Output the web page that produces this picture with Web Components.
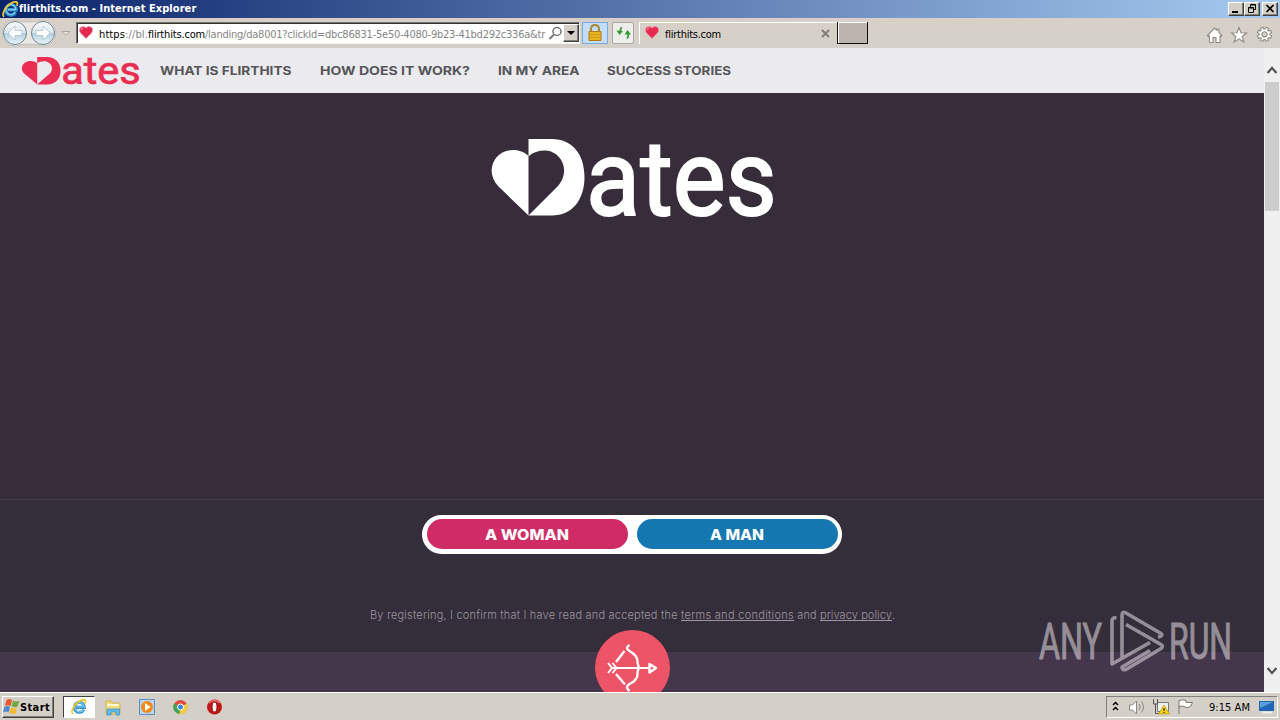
<!DOCTYPE html>
<html lang="en">
<head>
<meta charset="utf-8">
<title>flirthits.com - Internet Explorer</title>
<style>
  body {
    margin: 0;
    width: 1280px;
    height: 720px;
    overflow: hidden;
  }
</style>
</head>
<body>
<desktop-screen></desktop-screen>

<script>
// Fits its text to a fixed width: with letter-spacing, or by widening
// the glyphs when the "stretch" attribute is set.
class FitText extends HTMLElement {
  constructor() {
    super();
    this.attachShadow({ mode: 'open' });
    this.shadowRoot.innerHTML = `
      <style>
        :host { display: block; flex: none; }
        span { display: block; width: max-content; white-space: pre; transform-origin: 0 0; }
      </style>
      <span><slot></slot></span>
    `;
  }

  connectedCallback() {
    const width = Number(this.getAttribute('width'));
    const span = this.shadowRoot.querySelector('span');
    this.style.width = width + 'px';
    const natural = span.getBoundingClientRect().width;
    if (this.hasAttribute('stretch')) {
      span.style.transform = `scaleX(${width / natural})`;
    } else {
      span.style.letterSpacing = (width - natural) / this.textContent.length + 'px';
    }
  }
}

class HeartIcon extends HTMLElement {
  constructor() {
    super();
    this.attachShadow({ mode: 'open' });
    this.shadowRoot.innerHTML = `
      <style>
        :host { display: block; width: 14px; height: 13px; flex: none; }
        svg { display: block; }
      </style>
      <svg width="14" height="13" viewBox="0 0 14 13">
        <path d="M7 12.600 1.500 7C-2 2 3.800-1.500 7 2 10.200-1.500 16 2 12.500 7Z" fill="#e52a50" stroke="#f0a0ae" stroke-width=".6"/>
        <path d="M2 4q.3-2 2.200-2.200" fill="none" stroke="#f7a0b0"/>
      </svg>
    `;
  }
}

class IeIcon extends HTMLElement {
  constructor() {
    super();
    this.attachShadow({ mode: 'open' });
    this.shadowRoot.innerHTML = `
      <style>
        :host { display: block; width: 17px; height: 17px; flex: none; }
        svg { display: block; width: 100%; height: 100%; }
      </style>
      <svg viewBox="0 0 17 17">
        <path d="M13.600 11.300A5.300 5.300 0 1 1 14.200 8.900H5.500" fill="none" stroke="#2b8ed0" stroke-width="3.200"/>
        <path d="M13.300 11A5 5 0 1 1 13.900 8.500H6" fill="none" stroke="#7fd0f5" stroke-width="1.300"/>
        <path d="M2.200 15.800C-1.500 13.500 4.500 3.500 11.500 1.200c4-1.200 4.500 1 3.300 3.700" fill="none" stroke="#f1c626" stroke-width="1.800"/>
      </svg>
    `;
  }
}

class DatesLogo extends HTMLElement {
  constructor() {
    super();
    this.attachShadow({ mode: 'open' });
    this.shadowRoot.innerHTML = `
      <style>
        :host { display: block; flex: none; }
        svg { display: block; width: 100%; height: 100%; overflow: visible; }
        text { font: 400 106px Roboto, sans-serif; stroke: currentColor; stroke-width: 2; }
      </style>
      <svg viewBox="0 0 281 78" preserveAspectRatio="none" fill="currentColor">
        <path d="M36 76 6 47C-8 31 3 11 21 11q9 0 15 5.500Z"/>
        <path fill-rule="evenodd" d="M36.500 0H60C80 0 92.500 15 92.500 38S80 76.500 60 76.500H36.500ZM37 76 66 47C80 31 68 11.500 53 11.500q-10 0-16 5.500Z"/>
        <text x="94" y="76" textLength="191" lengthAdjust="spacingAndGlyphs">ates</text>
      </svg>
    `;
  }
}

class TitleBar extends HTMLElement {
  constructor() {
    super();
    this.attachShadow({ mode: 'open' });
    this.shadowRoot.innerHTML = `
      <style>
        :host {
          display: flex;
          align-items: center;
          box-sizing: border-box;
          height: 18px;
          padding: 0 2px;
          color: #fff;
          background: linear-gradient(90deg, #0a246a, #a6caf0);
        }
        h1 {
          flex: 1;
          margin: 0;
          font: bold 11px/18px "DejaVu Sans Condensed", "DejaVu Sans", sans-serif;
        }
        .button {
          box-sizing: border-box;
          width: 16px;
          height: 14px;
          background: #d4d0c8;
          border: 1px solid;
          border-color: #fff #404040 #404040 #fff;
          box-shadow: inset -1px -1px #808080;
        }
        .close { margin-left: 2px; }
        svg { display: block; }
      </style>
      <ie-icon></ie-icon>
      <h1><fit-text width="177">flirthits.com - Internet Explorer</fit-text></h1>
      <div class="button"><svg width="14" height="12"><path d="M3 9h6" stroke="#000" stroke-width="2"/></svg></div>
      <div class="button"><svg width="14" height="12" fill="none" stroke="#000"><path d="M5.500 4V1.500h5v5H9M5 2h6M3.500 4.500h5v5h-5zM3 5h6"/></svg></div>
      <div class="button close"><svg width="14" height="12"><path d="m3.500 2 7 7m0-7-7 7" stroke="#000" stroke-width="1.700"/></svg></div>
    `;
  }
}

class BrowserToolbar extends HTMLElement {
  constructor() {
    super();
    this.attachShadow({ mode: 'open' });
    this.shadowRoot.innerHTML = `
      <style>
        :host {
          display: flex;
          align-items: flex-start;
          box-sizing: border-box;
          height: 30px;
          padding-top: 4px;
          background: linear-gradient(#d8d0c8, #d4d0c8);
          font: 11px/23px "DejaVu Sans Condensed", "DejaVu Sans", sans-serif;
          color: #000;
        }
        svg { display: block; flex: none; }
        .arrows { margin-top: -3px; }
        .address {
          display: flex;
          box-sizing: border-box;
          width: 504px;
          height: 22px;
          margin-left: 4px;
          background: #fff;
          border: 1px solid;
          border-color: #77716e #f4f2ee #f4f2ee #77716e;
          box-shadow: inset 1px 1px #333;
        }
        .address heart-icon { margin: 3px 6px 0 2px; }
        .url { flex: none; color: #858585; width: 447px; display: flex; }
        .url b { font-weight: normal; color: #000; }
        .find { overflow: visible; }
        .drop {
          box-sizing: border-box;
          width: 16px;
          height: 18px;
          margin: 1px 0 0 auto;
          background: #d4d0c8;
          border: 1px solid;
          border-color: #fff #404040 #404040 #fff;
          box-shadow: inset -1px -1px #808080;
        }
        .lock {
          box-sizing: border-box;
          width: 26px;
          height: 22px;
          margin-left: 2px;
          border: 1px solid #78a8e0;
          background: #c3dcf8;
        }
        .refresh {
          box-sizing: border-box;
          width: 22px;
          height: 22px;
          margin-left: 4px;
          border: 1px solid #aaa8a4;
          border-radius: 2px;
          background: #edeeec;
        }
        .tab {
          display: flex;
          box-sizing: border-box;
          width: 198px;
          height: 22px;
          margin-left: 5px;
          padding-left: 5px;
          border: solid #fff;
          border-width: 1px 0 0 1px;
        }
        .tab heart-icon { margin: 3px 6px 0 0; }
        .tab svg { margin: 6px 7px 0 auto; }
        .new {
          box-sizing: border-box;
          width: 31px;
          height: 22px;
          background: #bcb4ad;
          border: solid #111;
          border-width: 0 1px 1px;
          box-shadow: inset 1px 1px #fff;
        }
        .tools { margin: 3px 6px 0 auto; }
      </style>
      <svg class="arrows" width="72" height="28" viewBox="0 19 72 28">
        <defs>
          <linearGradient id="disc" x2="0" y2="1"><stop stop-color="#f8fbfd"/><stop offset=".48" stop-color="#dce7ef"/><stop offset=".52" stop-color="#b4cfe0"/><stop offset="1" stop-color="#e8f5fc"/></linearGradient>
        </defs>
        <path d="M15 20q14 4 28 0a13 13 0 0 1 0 26q-14-4-28 0a13 13 0 0 1 0-26Z" fill="#ebe9e6" stroke="#c4c1bc"/>
        <circle cx="15" cy="33" r="11.500" fill="url(#disc)" stroke="#71828f"/>
        <circle cx="43" cy="33" r="11.500" fill="url(#disc)" stroke="#71828f"/>
        <path d="m15 26-7 7 7 7v-4.500h7v-5h-7ZM43 26l7 7-7 7v-4.500h-7v-5h7Z" fill="#fff" stroke="#a5b9c7" stroke-width=".7"/>
        <path d="M62 31.500h8l-4 4Z" fill="#e2dfd9" stroke="#aaa69f"/>
      </svg>
      <div class="address">
        <heart-icon></heart-icon>
        <div class="url"><b><fit-text width="26">https</fit-text></b><fit-text width="23">://bl.</fit-text><b><fit-text width="57">flirthits.com</fit-text></b><fit-text width="340">/landing/da8001?clickId=dbc86831-5e50-4080-9b23-41bd292c336a&amp;tr</fit-text></div>
        <svg class="find" width="14" height="20" fill="none"><circle cx="11" cy="8.500" r="4" stroke="#777" stroke-width="1.500"/><path d="m8 11.500-4.500 4.500" stroke="#777" stroke-width="2"/></svg>
        <div class="drop"><svg width="14" height="16"><path d="M3 6h8l-4 4Z"/></svg></div>
      </div>
      <div class="lock"><svg width="24" height="20"><path d="M8 9V5.500Q8.500 2 12 2t4 3.500V9" fill="none" stroke="#a98935" stroke-width="2"/><path d="M6 8.500h12v9H6Z" fill="#e8b21d" stroke="#ad7b11"/><path d="M7 11.500h11M7 14.500h11" stroke="#c99a24"/></svg></div>
      <div class="refresh"><svg width="20" height="20"><path d="M8.500 4 7 8.500m7 7q2-2 1-5" fill="none" stroke="#329b32" stroke-width="1.700"/><path d="M3.500 7.500 6.500 12l3.500-4ZM11.500 11.500l3-4.500 3.500 4.500Z" fill="#329b32"/></svg></div>
      <div class="tab">
        <heart-icon></heart-icon>
        <fit-text width="56">flirthits.com</fit-text>
        <svg width="9" height="9"><path d="m1 1 7 7m0-7L1 8" stroke="#827d76" stroke-width="2"/></svg>
      </div>
      <div class="new"></div>
      <svg class="tools" width="68" height="20" viewBox="0 0 68 20" fill="#fff" stroke="#8f8b86" stroke-width="1.100">
        <path d="m1.500 10.500 7-7.500 2.500 2.500V4h2v3.500l3 3-1 1-1-.5v6.500h-4v-5H7v5H3.500V11l-1 .5Z"/>
        <path d="m33 2.500 2 5.300 5.500.2-4.300 3.500 1.600 5.500-4.800-3.200-4.800 3.200 1.600-5.500L25.500 8l5.500-.2Z"/>
        <path fill-rule="evenodd" d="m56 2.500 1-.3.800 1.800h1.400l.8-1.800 2.500 1-.7 1.900.9.900 1.900-.7 1 2.500-1.700.8v1.400l1.700.8-1 2.500-1.900-.7-.9.900.7 1.900-2.500 1-.8-1.800h-1.400l-.8 1.800-2.500-1 .7-1.900-.9-.9-1.900.7-1-2.500 1.700-.8V8.600l-1.700-.8 1-2.500 1.900.7.900-.9-.7-1.900ZM58.500 6.700a2.600 2.600 0 1 0 .1 0Z"/>
      </svg>
    `;
  }
}

class SiteNav extends HTMLElement {
  constructor() {
    super();
    this.attachShadow({ mode: 'open' });
    this.shadowRoot.innerHTML = `
      <style>
        :host {
          display: flex;
          align-items: center;
          height: 45px;
          padding-left: 22px;
          background: #ebeaee;
        }
        dates-logo { width: 117px; height: 28px; color: #e92e51; }
        nav {
          display: flex;
          gap: 28px;
          margin-left: 21px;
          font: bold 12px/46px Inter, sans-serif;
          color: #56565a;
        }
      </style>
      <dates-logo></dates-logo>
      <nav>
        <fit-text stretch width="131.500">WHAT IS FLIRTHITS</fit-text>
        <fit-text stretch width="150">HOW DOES IT WORK?</fit-text>
        <fit-text stretch width="81.500">IN MY AREA</fit-text>
        <fit-text stretch width="124">SUCCESS STORIES</fit-text>
      </nav>
    `;
  }
}

class AnyRunMark extends HTMLElement {
  constructor() {
    super();
    this.attachShadow({ mode: 'open' });
    this.shadowRoot.innerHTML = `
      <style>
        :host { display: block; opacity: .5; }
        svg { display: block; overflow: visible; }
        text { font: 400 50px Roboto, sans-serif; stroke: #f4eff3; stroke-width: .9; }
      </style>
      <svg width="200" height="64" viewBox="1036 608 200 64" fill="#f4eff3">
        <text x="1039" y="659" textLength="63" lengthAdjust="spacingAndGlyphs">ANY</text>
        <text x="1169" y="659" textLength="63" lengthAdjust="spacingAndGlyphs">RUN</text>
        <path d="M1116.500 618q-4.500-1-4.500 3V664l38-21.500M1122 657.500V615q0-4 4-2l35 20.500q2.500 2.500-3 3.500M1126 624.500l35 20q3 2 0 4l-35 21q-4 1-4-2.500l28-16.500" fill="none" stroke="#f4eff3" stroke-width="3.600" stroke-linejoin="round"/>
      </svg>
    `;
  }
}

class LandingPage extends HTMLElement {
  constructor() {
    super();
    this.attachShadow({ mode: 'open' });
    this.shadowRoot.innerHTML = `
      <style>
        :host { display: block; position: relative; width: 1264px; height: 644px; overflow: hidden; }
        .hero {
          display: flex;
          justify-content: center;
          box-sizing: border-box;
          height: 406px;
          padding-top: 46px;
          background: #372c39;
        }
        .hero dates-logo { width: 281px; height: 78px; color: #fff; }
        .register {
          display: flex;
          flex-direction: column;
          align-items: center;
          box-sizing: border-box;
          height: 153px;
          padding-top: 15px;
          border-top: 1px solid #413c49;
          background: #342d3a;
        }
        .choice {
          display: flex;
          gap: 9px;
          box-sizing: border-box;
          width: 420px;
          height: 39px;
          padding: 4px 4px 5px 5px;
          border-radius: 20px;
          background: #fff;
        }
        button {
          display: flex;
          flex: 1;
          justify-content: center;
          padding: 1px 2px 0 0;
          border: 0;
          border-radius: 15px;
          color: #fff;
          font: 800 14px/30px Inter, sans-serif;
        }
        .woman { background: #d12b66; }
        .man { background: #1678b0; }
        p {
          display: flex;
          margin: 52px 0 0;
          font: 300 11px/18px Inter, sans-serif;
          color: #9b969e;
        }
        u { text-decoration: none; box-shadow: inset 0 -1px #99949d; height: 15px; }
        .next {
          display: flex;
          justify-content: center;
          height: 40px;
          background: #44364b;
        }
        .badge { margin-top: -22px; flex: none; }
        any-run-mark { position: absolute; left: 1036px; top: 560px; }
      </style>
      <site-nav></site-nav>
      <section class="hero"><dates-logo></dates-logo></section>
      <section class="register">
        <div class="choice">
          <button class="woman"><fit-text stretch width="84">A WOMAN</fit-text></button>
          <button class="man"><fit-text stretch width="54">A MAN</fit-text></button>
        </div>
        <p><fit-text width="311">By registering, I confirm that I have read and accepted the </fit-text><u><fit-text width="113">terms and conditions</fit-text></u><fit-text width="26"> and </fit-text><u><fit-text width="72">privacy policy</fit-text></u><fit-text width="2">.</fit-text></p>
      </section>
      <section class="next">
        <svg class="badge" width="75" height="75" viewBox="595 630 75 75" fill="none" stroke="#fff" stroke-width="2">
          <circle cx="632.500" cy="667.500" r="37.500" fill="#ed5567" stroke="none"/>
          <path d="m608 663 4 5-4 5m4.500-10 4 5-4 5M613 668h38" stroke-width="2"/>
          <path d="M616 662 624.500 651M616 674l9 10.500" stroke-width="2.400"/>
          <path d="M629.500 645q-5 3 0 6 9 5 8 12 2 4 0 9 1 8-8 12-5 3 0 7" stroke-width="2.400"/>
          <path d="M649.500 664v8.500l6.500-4.500Z" fill="#ed5567" stroke-width="2.400" stroke-linejoin="round"/>
        </svg>
      </section>
      <any-run-mark></any-run-mark>
    `;
  }
}

class ScrollBar extends HTMLElement {
  constructor() {
    super();
    this.attachShadow({ mode: 'open' });
    this.shadowRoot.innerHTML = `
      <style>
        :host {
          display: flex;
          flex-direction: column;
          box-sizing: border-box;
          width: 16px;
          height: 644px;
          padding: 16px 1px 15px;
          background: #f0f0f0;
        }
        .thumb { height: 129px; margin-top: 6px; background: #cdcdcd; }
        svg { display: block; }
        .down { margin-top: auto; }
      </style>
      <svg width="14" height="12"><path d="m2.500 9 4.500-5 4.500 5" fill="none" stroke="#555" stroke-width="2.200"/></svg>
      <div class="thumb"></div>
      <svg class="down" width="14" height="12"><path d="m2.500 3 4.500 5 4.500-5" fill="none" stroke="#555" stroke-width="2.200"/></svg>
    `;
  }
}

class TaskBar extends HTMLElement {
  constructor() {
    super();
    this.attachShadow({ mode: 'open' });
    this.shadowRoot.innerHTML = `
      <style>
        :host {
          display: flex;
          align-items: flex-start;
          box-sizing: border-box;
          height: 28px;
          padding: 3px 2px 0;
          background: #d4d0c8;
          border-top: 1px solid #fff;
          font: 11px/22px "DejaVu Sans Condensed", "DejaVu Sans", sans-serif;
          color: #000;
        }
        svg { display: block; flex: none; }
        .start {
          display: flex;
          box-sizing: border-box;
          width: 52px;
          height: 22px;
          border: 1px solid;
          border-color: #fff #404040 #404040 #fff;
          box-shadow: inset -1px -1px #808080;
          font-weight: bold;
          line-height: 21px;
        }
        .active {
          display: flex;
          justify-content: center;
          box-sizing: border-box;
          width: 32px;
          height: 22px;
          margin-left: 9px;
          padding-top: 2px;
          background: #fff;
          border: 1px solid;
          border-color: #404040 #fff #fff #404040;
        }
        .active ie-icon { width: 16px; height: 16px; }
        .pinned { margin: 3px 0 0 9px; }
        .tray {
          display: flex;
          box-sizing: border-box;
          width: 172px;
          height: 22px;
          margin-left: auto;
          border: 1px solid;
          border-color: #808080 #fff #fff #808080;
          line-height: 21px;
        }
        .tray fit-text { margin-left: 7px; }
        .screen { margin: 3px 0 0 9px; }
      </style>
      <div class="start">
        <svg width="17" height="20" viewBox="1 0 16 20">
          <path d="M4 3q3-2 5.500 0L8 9Q5 7.500 2.500 9Z" fill="#e8582a"/>
          <path d="M10.500 3.500q3 2 6.500 0l-2 6Q12 11 9 9Z" fill="#70a93e"/>
          <path d="M2 10q3-2 5.500 0l-1.500 5.500Q4 13.500.500 15.500Z" fill="#4a88cf"/>
          <path d="M8.500 10.500q3 1.500 6 .3L13 16.500Q10 18 7 15.500Z" fill="#f1bd2e"/>
        </svg>
        <fit-text width="30">Start</fit-text>
      </div>
      <div class="active"><ie-icon></ie-icon></div>
      <svg class="pinned" width="120" height="17" viewBox="104 699 120 17">
        <path d="M106 701h5l1 2h8v11h-14Z" fill="#f3dc82" stroke="#cfa93d" stroke-width=".8"/>
        <path d="M107 705h12" stroke="#fff8ce" stroke-width="2"/>
        <path d="M107 715v-6h12.500v6H116v-3h-5v3Z" fill="#65b9e7" stroke="#328cc7" stroke-width=".7"/>
        <path d="M139.500 699.500h15v15h-15z" fill="#b9d5f2" stroke="#5590cf"/>
        <circle cx="147" cy="707" r="6" fill="#f28a18"/>
        <path d="m145 703 5.500 4-5.500 4Z" fill="#fff"/>
        <circle cx="180.500" cy="707" r="7" fill="#e24a3b"/>
        <path d="M180.500 707 174 703.500A7.200 7.200 0 0 0 179.500 714Z" fill="#45a351"/>
        <path d="M180.500 707l6.300-3.500A7.200 7.200 0 0 1 179.500 714Z" fill="#f6ce3f"/>
        <circle cx="180.500" cy="707" r="3" fill="#3e83db" stroke="#fff"/>
        <circle cx="214.500" cy="707" r="7.500" fill="#bd1717"/>
        <path d="M209 703q5-5 11 0" fill="none" stroke="#ef7772" stroke-width="1.500"/>
        <ellipse cx="214.500" cy="707" rx="2.500" ry="5" fill="#f8eeee" stroke="#83110f"/>
      </svg>
      <div class="tray">
        <svg width="95" height="20" viewBox="1107 697 95 20" fill="none">
          <path d="m1113 705 2.500-2.500 2.500 2.500m-5 5 2.500-2.500 2.500 2.500" stroke="#000" stroke-width="1.500"/>
          <path d="M1129.500 705h3l4-4v13l-4-4h-3Z" fill="#fff" stroke="#888"/>
          <path d="M1139 704q2.500 3 0 6m2.500-8.500q4 5.500 0 11" stroke="#888"/>
          <path d="M1157.500 702.500h11v9h-11z" fill="#eee" stroke="#777"/>
          <path d="M1153.500 699v5h4v-5m-2 5v9.500h6" stroke="#555"/>
          <path d="m1164 705 5.500 9h-11Z" fill="#f6d21d" stroke="#bb9610" stroke-width=".7"/>
          <path d="M1164 708v3m0 1v1" stroke="#000"/>
          <path d="M1179 714v-13.500q4-1.500 7 0v2h6.500l-2 4q-4 2.500-6.500 0-2-1-5 0" fill="#fff" stroke="#777"/>
        </svg>
        <fit-text width="41">9:15 AM</fit-text>
        <svg class="screen" width="16" height="14"><path d="M0 1h15v10H0z" fill="#2366b8"/><path d="M1 2h13L1 8Z" fill="#5ba0dd"/><path d="M3 12.500h10" stroke="#eee" stroke-width="2"/></svg>
      </div>
    `;
  }
}

class DesktopScreen extends HTMLElement {
  constructor() {
    super();
    this.attachShadow({ mode: 'open' });
    this.shadowRoot.innerHTML = `
      <style>
        :host { display: flex; flex-direction: column; width: 1280px; height: 720px; }
        main { display: flex; }
      </style>
      <title-bar></title-bar>
      <browser-toolbar></browser-toolbar>
      <main>
        <landing-page></landing-page>
        <scroll-bar></scroll-bar>
      </main>
      <task-bar></task-bar>
    `;
  }
}

customElements.define('fit-text', FitText);
customElements.define('heart-icon', HeartIcon);
customElements.define('ie-icon', IeIcon);
customElements.define('dates-logo', DatesLogo);
customElements.define('title-bar', TitleBar);
customElements.define('browser-toolbar', BrowserToolbar);
customElements.define('site-nav', SiteNav);
customElements.define('any-run-mark', AnyRunMark);
customElements.define('landing-page', LandingPage);
customElements.define('scroll-bar', ScrollBar);
customElements.define('task-bar', TaskBar);
customElements.define('desktop-screen', DesktopScreen);
</script>
</body>
</html>
